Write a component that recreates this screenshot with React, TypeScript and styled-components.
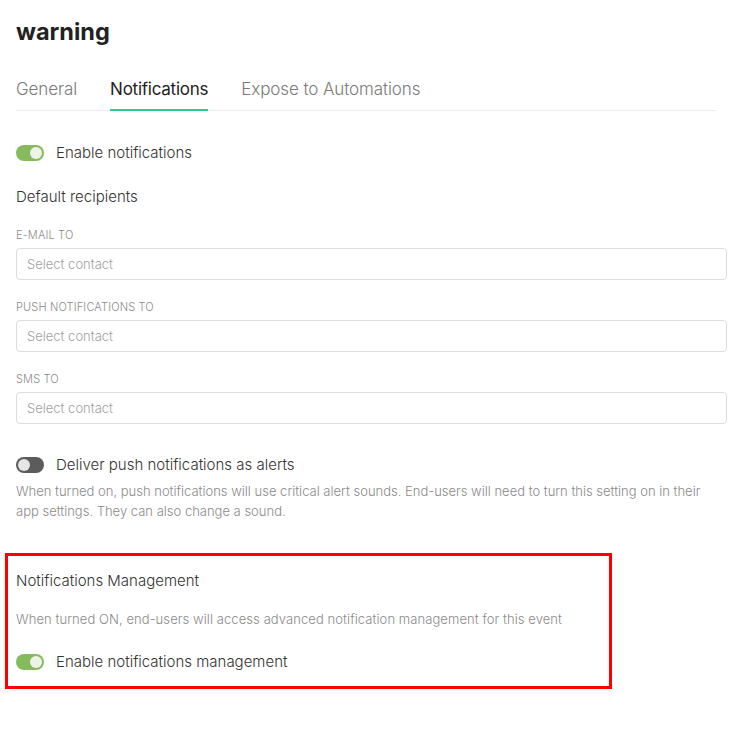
import React, { useState } from "react";
import styled, { createGlobalStyle } from "styled-components";

const GlobalStyle = createGlobalStyle`
  body {
    margin: 0;
    background: #ffffff;
    font-family: Inter, "Noto Sans", sans-serif;
    font-weight: 300;
    color: #333333;
  }
`;

const Page = styled.div`
  width: 711px;
  padding: 16px 0 0 16px;
`;

const Title = styled.h1`
  margin: 0;
  font-size: 23.5px;
  font-weight: 700;
  line-height: 32px;
  color: #222222;
`;

const Tabs = styled.div`
  display: flex;
  gap: 33px;
  margin-top: 29px;
  width: 700px;
  border-bottom: 1px solid #ececec;
`;

const Tab = styled.div<{ $active?: boolean }>`
  font-size: 17px;
  line-height: 24px;
  letter-spacing: ${(p) => (p.$active ? "-0.25px" : "-0.1px")};
  padding-bottom: 8px;
  margin-bottom: -1px;
  font-weight: ${(p) => (p.$active ? 400 : 300)};
  color: ${(p) => (p.$active ? "#222222" : "#7a7a7a")};
  border-bottom: 2px solid ${(p) => (p.$active ? "#2ecc8a" : "transparent")};
  cursor: pointer;
`;

const Body = styled.div`
  display: flex;
  flex-direction: column;
  padding-top: 31px;
`;

const ToggleRow = styled.label`
  display: flex;
  align-items: center;
  gap: 12px;
  font-size: 15px;
  line-height: 22px;
  color: #333333;
  cursor: pointer;
`;

const Track = styled.span<{ $on: boolean }>`
  position: relative;
  width: 28px;
  height: 16px;
  border-radius: 8px;
  background: ${(p) => (p.$on ? "#86bb5d" : "#5c5c5c")};
  flex-shrink: 0;
`;

const Knob = styled.span<{ $on: boolean }>`
  position: absolute;
  top: 2px;
  left: ${(p) => (p.$on ? "14px" : "2px")};
  width: 12px;
  height: 12px;
  border-radius: 50%;
  background: ${(p) => (p.$on ? "#eef3e8" : "#e6e6e6")};
`;

const SectionTitle = styled.div`
  font-size: 15px;
  line-height: 22px;
  color: #333333;
  margin-top: 22px;
`;

const FieldLabel = styled.div`
  font-size: 11px;
  line-height: 16px;
  letter-spacing: 0.15px;
  color: #8a8a8a;
  text-transform: uppercase;
  margin-top: 19px;
  margin-bottom: 5px;
`;

const Input = styled.input`
  box-sizing: border-box;
  width: 711px;
  height: 32px;
  padding: 0 10px;
  border: 1px solid #dddddd;
  border-radius: 4px;
  font-family: inherit;
  font-weight: 300;
  font-size: 13px;
  color: #333333;
  outline: none;
  &::placeholder {
    color: #a0a0a0;
  }
`;

const AlertBlock = styled.div`
  margin-top: 30px;
`;

const Hint = styled.p`
  max-width: 696px;
  margin: 5px 0 0;
  font-size: 13px;
  line-height: 20px;
  color: #8a8a8a;
`;

const ManageBox = styled.section`
  box-sizing: border-box;
  width: 607px;
  margin: 32px 0 0 -11px;
  padding: 14px 8px 13px 8px;
  border: 3px solid #ff0000;
`;

const ManageTitle = styled.div`
  font-size: 15px;
  line-height: 22px;
  color: #333333;
`;

const ManageHint = styled.p`
  margin: 17px 0 22px;
  font-size: 13px;
  line-height: 20px;
  letter-spacing: 0.08px;
  color: #8a8a8a;
`;

function Toggle({ on, onChange, label }: { on: boolean; onChange: () => void; label: string }) {
  return (
    <ToggleRow onClick={onChange}>
      <Track $on={on}>
        <Knob $on={on} />
      </Track>
      {label}
    </ToggleRow>
  );
}

const fields = ["E-mail to", "Push notifications to", "SMS to"];

export default function App() {
  const [enabled, setEnabled] = useState(true);
  const [alerts, setAlerts] = useState(false);
  const [manage, setManage] = useState(true);

  return (
    <>
      <GlobalStyle />
      <Page>
        <Title>warning</Title>
        <Tabs>
          <Tab>General</Tab>
          <Tab $active>Notifications</Tab>
          <Tab>Expose to Automations</Tab>
        </Tabs>

        <Body>
          <Toggle on={enabled} onChange={() => setEnabled(!enabled)} label="Enable notifications" />

          <SectionTitle>Default recipients</SectionTitle>
          {fields.map((f) => (
            <div key={f}>
              <FieldLabel>{f}</FieldLabel>
              <Input placeholder="Select contact" />
            </div>
          ))}

          <AlertBlock>
            <Toggle
              on={alerts}
              onChange={() => setAlerts(!alerts)}
              label="Deliver push notifications as alerts"
            />
            <Hint>
              When turned on, push notifications will use critical alert sounds. End-users will need to turn this
              setting on in their app settings. They can also change a sound.
            </Hint>
          </AlertBlock>

          <ManageBox>
            <ManageTitle>Notifications Management</ManageTitle>
            <ManageHint>
              When turned ON, end-users will access advanced notification management for this event
            </ManageHint>
            <Toggle
              on={manage}
              onChange={() => setManage(!manage)}
              label="Enable notifications management"
            />
          </ManageBox>
        </Body>
      </Page>
    </>
  );
}
